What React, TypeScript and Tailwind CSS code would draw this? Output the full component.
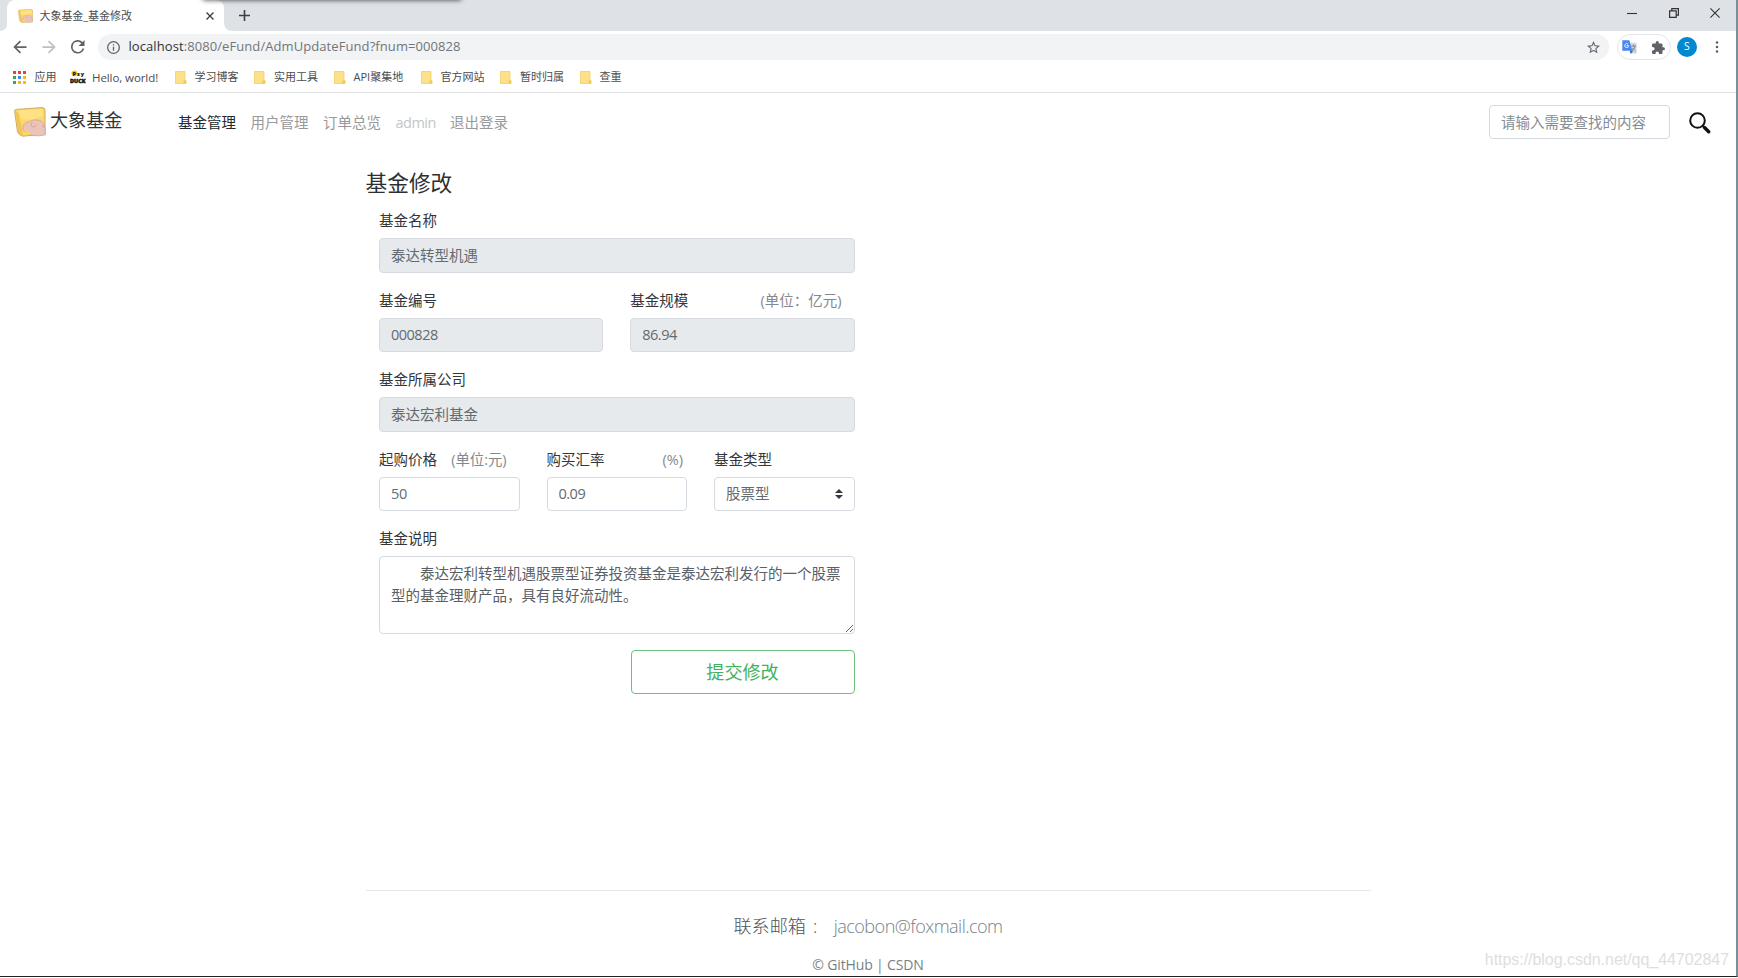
import React, { useState } from 'react';

const BOOKMARKS = [
  { name: '学习博客', width: 'w-[79.5px]' },
  { name: '实用工具', width: 'w-[79.5px]' },
  { name: 'API聚集地', width: 'w-[87px]' },
  { name: '官方网站', width: 'w-[79.5px]' },
  { name: '暂时归属', width: 'w-[79.5px]' },
  { name: '查重', width: 'w-[60px]' },
];

const APP_DOTS = ['#ea4335', '#ea4335', '#ea4335', '#34a853', '#4285f4', '#fbbc05', '#34a853', '#fbbc05', '#fbbc05'];

const Logo: React.FC<{ className?: string }> = ({ className }) => (
  <svg viewBox="0 0 32 30" className={className}>
    <path d="M.6 4 Q.6 2.600 2.500 2.400 L28 .6 Q31 .6 31 3.500 V27 L9 29.200 Q5 28.500 3.500 25 Z" fill="#fbd868" stroke="#c99f62" strokeWidth=".9" />
    <path d="M1.200 4 Q4 4.500 5 8 L9 29 Q5 28 4 25 Z" fill="#f0c457" />
    <path d="M5 3.500 L28 2 L29 9 Q18 14 7 12 Z" fill="#ffe283" />
    <path d="M9 20 Q9.500 16 15 14.500 Q20 11.500 26 13.500 Q31 16 31.300 22 V28 Q24 29.500 18 28.500 L11 25 Q8 23.500 9 20 Z" fill="#ebc3b9" stroke="#c39a90" strokeWidth=".6" />
    <path d="M18 15.500 Q16 18 18.500 20 Q22 20.500 23 17.500 M28 18 q2 1 1.500 3" fill="none" stroke="#c9978c" strokeWidth=".6" />
    <path d="M10.500 23.500 L16 24.500 L17 27.500 L11.500 28.500 Z" fill="#fbd75f" />
  </svg>
);

const TabStrip: React.FC = () => (
  <div className="relative flex h-[31px] shrink-0 items-stretch bg-[#dee1e6]">
    <div className="absolute top-[-5px] left-[203px] z-10 h-[5px] w-[258px] shadow-[0_0_5px_rgba(0,0,0,0.75)]" />
    <div className="flex w-[7px] items-end bg-white">
      <div className="h-full w-full rounded-br-[7px] bg-[#dee1e6]" />
    </div>
    <div className="flex w-[217px] items-center rounded-t-[8px] bg-white pl-[11px]">
      <Logo className="h-[14px] w-[15px]" />
      <span className="mt-[2px] ml-[6.5px] text-[11px] tracking-[-0.05px] text-[#4a4d51]">大象基金_基金修改</span>
      <svg viewBox="0 0 8 8" className="mr-[10px] ml-auto h-[8px] w-[8px]" stroke="#3c4043" strokeWidth="1.4">
        <path d="M.5 .5l7 7M7.500 .5l-7 7" />
      </svg>
    </div>
    <div className="w-[8px] bg-white">
      <div className="h-full w-full rounded-bl-[8px] bg-[#dee1e6]" />
    </div>
    <svg viewBox="0 0 11 11" className="mt-[10px] ml-[7px] h-[11px] w-[11px]" stroke="#3c4043" strokeWidth="1.6">
      <path d="M5.500 0v11M0 5.500h11" />
    </svg>
    <div className="mr-[16px] ml-auto flex items-center gap-[31.5px] pb-[5px]">
      <svg viewBox="0 0 10 10" className="h-[10px] w-[10px]" stroke="#333" strokeWidth="1.1">
        <path d="M0 5.500h10" />
      </svg>
      <svg viewBox="0 0 10 10" className="h-[10px] w-[10px]" stroke="#333" strokeWidth="1.2" fill="none">
        <path d="M.6 2.800h6.600v6.600H.6zM2.800 2.600V.6h6.600v6.600H7.400" />
      </svg>
      <svg viewBox="0 0 10 10" className="h-[10px] w-[10px]" stroke="#333" strokeWidth="1.1">
        <path d="M.4 .4l9.200 9.200M9.600 .4L.4 9.600" />
      </svg>
    </div>
  </div>
);

const Toolbar: React.FC = () => (
  <div className="flex h-[32px] shrink-0 items-center pl-[13px]">
    <svg viewBox="0 0 16 16" className="h-[14px] w-[14px]" fill="none" stroke="#5f6368" strokeWidth="2">
      <path d="M15.500 8H2M8.500 1.300L1.800 8l6.700 6.700" />
    </svg>
    <svg viewBox="0 0 16 16" className="ml-[15px] h-[14px] w-[14px]" fill="none" stroke="#bdc1c6" strokeWidth="2">
      <path d="M.5 8H14M7.500 1.300L14.200 8l-6.700 6.700" />
    </svg>
    <svg viewBox="4 4 16 16" className="ml-[15px] h-[13.5px] w-[13.5px]" fill="#5f6368">
      <path d="M17.650 6.350A7.958 7.958 0 0 0 12 4a8 8 0 1 0 7.730 10h-2.080A6 6 0 1 1 12 6c1.660 0 3.140.69 4.220 1.780L13 11h7V4l-2.350 2.350z" />
    </svg>
    <div className="ml-[13.5px] flex h-[26px] w-[1511px] items-center rounded-full bg-[#f1f3f4] pl-[9px]">
      <svg viewBox="2 2 20 20" className="h-[13px] w-[13px]" fill="#5f6368">
        <path d="M11 7h2v2h-2zm0 4h2v6h-2zm1-9a10 10 0 1 0 0 20 10 10 0 0 0 0-20zm0 18a8 8 0 1 1 0-16 8 8 0 0 1 0 16z" />
      </svg>
      <span className="ml-[8.5px] text-[13px] tracking-[0.08px] text-[#72767a]">
        <span className="text-[#303236]">localhost</span>:8080/eFund/AdmUpdateFund?fnum=000828
      </span>
      <svg viewBox="2 2 20 20" className="mr-[9px] ml-auto h-[13px] w-[13px]" fill="#5f6368">
        <path d="M22 9.240l-7.190-.62L12 2 9.190 8.630 2 9.240l5.460 4.730L5.820 21 12 17.270 18.180 21l-1.630-7.030L22 9.240zM12 15.400l-3.760 2.270 1-4.280-3.320-2.880 4.380-.38L12 6.100l1.710 4.040 4.380.38-3.320 2.880 1 4.280L12 15.400z" />
      </svg>
    </div>
    <div className="ml-[8px] flex h-[26px] w-[54px] items-center justify-between rounded-full border border-[#e3e5e8] pr-[5px] pl-[4px]">
      <svg viewBox="0 0 16 16" className="h-[15px] w-[15px]">
        <path d="M8 3h7.500v11.500H9z" fill="#d3d5d8" />
        <path d="M10 6.500h5M12.500 5v1.500M14 7q-1 3-3.500 4M11 8.500l3 3" stroke="#5f7d9b" strokeWidth=".9" fill="none" />
        <path d="M.3 .3h7.500l3.200 11.200H.3z" fill="#4a86f0" />
        <path d="M8 11.500h4l-2.600 3.500z" fill="#3367d6" />
        <path d="M7 5.900H4.900M6.400 4.400a2.100 2.100 0 1 0 .7 1.600" stroke="#fff" strokeWidth=".9" fill="none" />
      </svg>
      <svg viewBox="2 1 21 21" className="h-[13px] w-[13px]" fill="#5f6368">
        <path d="M20.500 11H19V7a2 2 0 0 0-2-2h-4V3.500a2.500 2.500 0 0 0-5 0V5H4a2 2 0 0 0-2 2v3.800h1.500a2.700 2.700 0 0 1 0 5.400H2V20a2 2 0 0 0 2 2h3.800v-1.500a2.700 2.700 0 0 1 5.400 0V22H17a2 2 0 0 0 2-2v-4h1.500a2.500 2.500 0 0 0 0-5z" />
      </svg>
    </div>
    <div className="ml-[6px] flex h-[20px] w-[20px] items-center justify-center rounded-full bg-[#0288d1] text-[10.5px] text-white">S</div>
    <svg viewBox="0 0 4 12" className="ml-[18px] h-[12px] w-[4px]" fill="#5f6368">
      <circle cx="2" cy="1.500" r="1.300" />
      <circle cx="2" cy="6" r="1.300" />
      <circle cx="2" cy="10.500" r="1.300" />
    </svg>
  </div>
);

const BookmarksBar: React.FC = () => (
  <div className="flex h-[30px] shrink-0 items-center border-b border-[#dfe1e3] pb-px pl-[13px] text-[11px] text-[#4a4d51]">
    <div className="grid grid-cols-3 gap-[2px]">
      {APP_DOTS.map((color, i) => (
        <span key={i} className="h-[3px] w-[3px]" style={{ backgroundColor: color }} />
      ))}
    </div>
    <span className="mt-px ml-[8.5px] w-[35.5px]">应用</span>
    <svg viewBox="0 0 16 14" className="h-[14px] w-[16px]">
      <ellipse cx="4.500" cy="3.200" rx="3" ry="2.700" fill="#f4c20d" />
      <text x="2.500" y="5.500" fontSize="5.500" fontWeight="900" fill="#111" textLength="11.500">Psy</text>
      <text x="0" y="12.500" fontSize="5" fontWeight="900" fill="#111" stroke="#111" strokeWidth=".4" textLength="15.500" lengthAdjust="spacingAndGlyphs">DUCK</text>
    </svg>
    <span className="mt-px ml-[6px] w-[82.5px] text-[11.5px] tracking-[-0.08px] whitespace-nowrap">Hello, world!</span>
    {BOOKMARKS.map((item) => (
      <div key={item.name} className={`flex shrink-0 items-center ${item.width}`}>
        <svg viewBox="0 0 12 13" className="h-[13px] w-[12px]">
          <path d="M.5 .5h9.500v9h1v3H.5z" fill="#fde08a" stroke="#f3cf63" strokeWidth=".8" />
          <path d="M8.500 12.500v-2.500l1.500-1 1.200 1v2.500z" fill="#f3c94f" />
        </svg>
        <span className="mt-px ml-[8px] whitespace-nowrap">{item.name}</span>
      </div>
    ))}
  </div>
);

const Navbar: React.FC = () => (
  <nav className="flex h-[60px] shrink-0 items-center pl-[14px] text-[14.5px]">
    <Logo className="-mt-[2px] h-[30px] w-[32px]" />
    <span className="ml-[4px] w-[128px] pb-[4px] text-[18.1px] text-[#2f3337]">大象基金</span>
    <div className="flex gap-[14.5px] text-[#97999b]">
      <a className="text-[#26292c]">基金管理</a>
      <a>用户管理</a>
      <a>订单总览</a>
      <a className="w-[40px] tracking-[-0.5px] text-[#c4c6c8]">admin</a>
      <a>退出登录</a>
    </div>
    <input
      placeholder="请输入需要查找的内容"
      className="mr-[19px] ml-auto -mt-[2px] h-[34px] w-[181px] rounded-[4px] border border-[#d3dae1] px-[11px] outline-none placeholder:text-[#858c93]"
    />
    <svg viewBox="0 0 22 22" className="mr-[25px] h-[22px] w-[22px]" fill="none">
      <circle cx="8.500" cy="8.500" r="7.300" stroke="#111" strokeWidth="2" />
      <path d="M14 14l1.500 1.500" stroke="#111" strokeWidth="2.200" />
      <path d="M15.500 15.500l4.200 4.200" stroke="#111" strokeWidth="3.400" strokeLinecap="round" />
    </svg>
  </nav>
);

interface FieldProps {
  label: string;
  hint?: string;
  hintClass?: string;
  children: React.ReactNode;
}

const Field: React.FC<FieldProps> = ({ label, hint, hintClass = '', children }) => (
  <div className="min-w-0">
    <div className="mb-[6px] flex h-[22px] items-center whitespace-nowrap">
      <label className="text-[#33373b]">{label}</label>
      {hint && <span className={`ml-auto text-[#85898e] ${hintClass}`}>{hint}</span>}
    </div>
    {children}
  </div>
);

const inputClass =
  'block h-[34.5px] w-full rounded-[4px] border border-[#d5dbe1] px-[11px] text-[#646a71] outline-none disabled:bg-[#e7eaed]';

const FundForm: React.FC = () => {
  const [price, setPrice] = useState('50');
  const [rate, setRate] = useState('0.09');

  return (
    <form className="ml-[13.5px] flex w-[475.5px] flex-col gap-[17px] text-[14.5px]">
      <Field label="基金名称">
        <input disabled value="泰达转型机遇" className={`${inputClass} pb-[2px]`} />
      </Field>
      <div className="grid grid-cols-2 gap-[27px]">
        <Field label="基金编号">
          <input disabled value="000828" className={`${inputClass} tracking-[-0.5px]`} />
        </Field>
        <Field label="基金规模" hint="(单位：亿元)" hintClass="mr-[13px]">
          <input disabled value="86.94" className={`${inputClass} tracking-[-0.5px]`} />
        </Field>
      </div>
      <Field label="基金所属公司">
        <input disabled value="泰达宏利基金" className={`${inputClass} pb-[2px]`} />
      </Field>
      <div className="grid grid-cols-3 gap-[27px]">
        <Field label="起购价格" hint="(单位:元)" hintClass="mr-[13px] tracking-[-0.1px]">
          <input value={price} onChange={(e) => setPrice(e.target.value)} className={`${inputClass} tracking-[-0.4px]`} />
        </Field>
        <Field label="购买汇率" hint="(%)" hintClass="mr-[4px]">
          <input value={rate} onChange={(e) => setRate(e.target.value)} className={`${inputClass} tracking-[-0.5px]`} />
        </Field>
        <Field label="基金类型">
          <div className="relative">
            <select className={`${inputClass} appearance-none`}>
              <option>股票型</option>
            </select>
            <svg viewBox="0 0 4 5" className="pointer-events-none absolute top-[12px] right-[11.5px] h-[10px] w-[8px]">
              <path fill="#343a40" d="M2 0L0 2h4zm0 5L0 3h4z" />
            </svg>
          </div>
        </Field>
      </div>
      <Field label="基金说明">
        <textarea
          className="block h-[78px] w-full rounded-[4px] border border-[#d5dbe1] px-[11px] py-[6px] leading-[22px] text-[#596067] outline-none"
          defaultValue="　　泰达宏利转型机遇股票型证券投资基金是泰达宏利发行的一个股票型的基金理财产品，具有良好流动性。"
        />
      </Field>
      <button
        type="button"
        className="-mt-px h-[44px] w-[224px] self-end rounded-[4px] border border-[#6cc381] pt-[1px] text-[18.1px] text-[#43b15d]"
      >
        提交修改
      </button>
    </form>
  );
};

const App: React.FC = () => (
  <div className="relative h-[978px] w-[1738px] overflow-hidden bg-white font-['Open_Sans','Noto_Sans_CJK_SC',sans-serif] font-normal">
    <div className="flex h-[977px] flex-col border-r-2 border-b border-r-[#78909a] border-b-[#222]">
      <TabStrip />
      <Toolbar />
      <BookmarksBar />
      <Navbar />
      <main className="mx-auto h-[738px] w-[1005px] shrink-0 border-b border-[#e8e8e8] pt-[15px]">
        <h4 className="mb-[12px] h-[30px] text-[21.7px] leading-[30px] text-[#2c3034]">基金修改</h4>
        <FundForm />
      </main>
      <footer className="flex shrink-0 flex-col items-center pt-[22px] text-[#777f87]">
        <p className="flex h-[28px] w-[269px] items-center justify-between text-[18.1px] font-light whitespace-nowrap">
          <span className="text-[#4d5359]">
            联系邮箱<span className="ml-[7px]">:</span>
          </span>
          <span className="tracking-[-0.55px]">jacobon@foxmail.com</span>
        </p>
        <p className="mt-[13px] h-[22px] shrink-0 text-[14px] leading-[22px] tracking-[-0.15px]">© GitHub | CSDN</p>
      </footer>
    </div>
    <div className="absolute right-[9px] bottom-[6px] font-['Liberation_Sans',sans-serif] text-[16px] tracking-[-0.04px] text-[#dedede]">
      https://blog.csdn.net/qq_44702847
    </div>
  </div>
);

export default App;
